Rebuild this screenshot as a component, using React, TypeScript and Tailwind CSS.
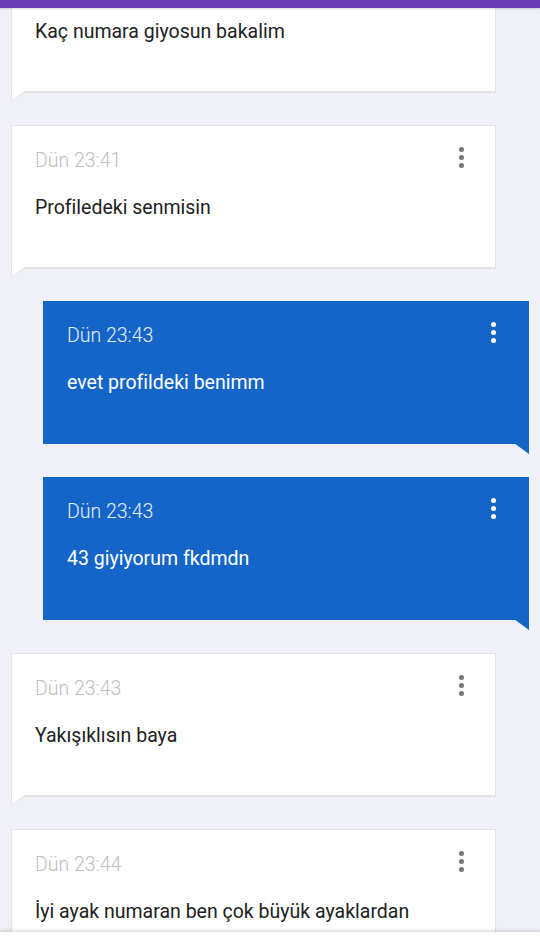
import React from "react";

type Msg = { time: string; text: string; mine?: boolean };

const MESSAGES: Msg[] = [
  { time: "Dün 23:40", text: "Kaç numara giyosun bakalim" },
  { time: "Dün 23:41", text: "Profiledeki senmisin" },
  { time: "Dün 23:43", text: "evet profildeki benimm", mine: true },
  { time: "Dün 23:43", text: "43 giyiyorum fkdmdn", mine: true },
  { time: "Dün 23:43", text: "Yakışıklısın baya" },
  { time: "Dün 23:44", text: "İyi ayak numaran ben çok büyük ayaklardan" },
];

function Dots({ light }: { light?: boolean }) {
  const c = light ? "bg-white" : "bg-[#777]";
  return (
    <div className="flex flex-col items-center gap-[3px] -mt-[4px]">
      <span className={`w-[5px] h-[5px] rounded-full ${c}`} />
      <span className={`w-[5px] h-[5px] rounded-full ${c}`} />
      <span className={`w-[5px] h-[5px] rounded-full ${c}`} />
    </div>
  );
}

function Bubble({ msg }: { msg: Msg }) {
  const mine = !!msg.mine;
  return (
    <div className={mine ? "pl-[43px] pr-[11px]" : "pl-[11px] pr-[44px]"}>
      <div
        className={`relative h-[143px] pt-[25px] ${
          mine
            ? "bg-[#1565c8] text-white pl-6 pr-[33px]"
            : "bg-white border border-[#e2e3e8] shadow-[0_1px_1px_rgba(0,0,0,0.06)] pl-[23px] pr-[31px]"
        }`}
      >
        <div className="flex items-start justify-between h-5">
          <span
            className={`text-[19.5px] leading-5 font-light ${
              mine ? "text-[#e8effa]" : "text-[#bdbdbd]"
            }`}
          >
            {msg.time}
          </span>
          <Dots light={mine} />
        </div>
        <p
          className={`mt-[25px] text-[19.5px] leading-6 [font-variant-ligatures:none] ${
            mine ? "text-white" : "text-[#212121]"
          }`}
        >
          {msg.text}
        </p>
        {/* bubble tail */}
        {mine ? (
          <svg className="absolute right-0 -bottom-[10px]" width="15" height="11" viewBox="0 0 15 11">
            <polygon points="0,0 15,0 15,11" fill="#1565c8" />
          </svg>
        ) : (
          <svg className="absolute -left-px -bottom-[11px]" width="16" height="12" viewBox="0 0 16 12">
            <polygon points="0.5,0 15,0 0.5,11" fill="#fff" />
            <polyline points="0.5,0 0.5,11 15,1" fill="none" stroke="#e2e3e8" strokeWidth="1" />
          </svg>
        )}
      </div>
    </div>
  );
}

export default function App() {
  return (
    <div
      className="flex flex-col h-[939px] w-[540px] overflow-hidden bg-[#f0f1f8]"
      style={{ fontFamily: "Roboto, 'Noto Sans', sans-serif" }}
    >
      <div className="h-2 shrink-0 bg-[#6a3bb5] relative z-10 shadow-[0_1px_2px_rgba(0,0,0,0.15)]" />
      <div className="flex-1 overflow-hidden">
        <div className="flex flex-col gap-[33px] -mt-[59px]">
          {MESSAGES.map((m, i) => (
            <Bubble key={i} msg={m} />
          ))}
        </div>
      </div>
      <div className="h-[7px] shrink-0 bg-white relative z-10 shadow-[0_-2px_3px_rgba(0,0,0,0.12)]" />
    </div>
  );
}
